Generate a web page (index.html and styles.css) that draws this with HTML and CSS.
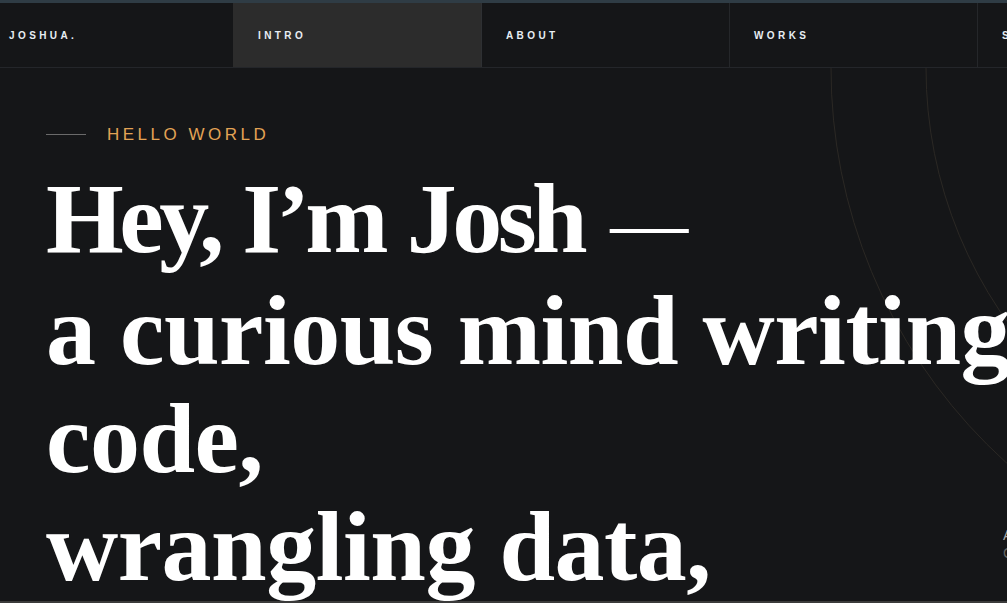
FILE: index.html
```html
<!DOCTYPE html>
<html lang="en">
<head>
<meta charset="utf-8">
<title>Joshua — Intro</title>
<link rel="stylesheet" href="styles.css">
</head>
<body>
<div class="frame">
  <div class="topbar"></div>
  <header class="header">
    <a class="brand cell" href="#">JOSHUA.</a>
    <nav class="nav">
      <a class="cell nav-item active" href="#">INTRO</a>
      <a class="cell nav-item" href="#">ABOUT</a>
      <a class="cell nav-item" href="#">WORKS</a>
      <a class="cell nav-item" href="#">SKILLS</a>
    </nav>
  </header>
  <main class="hero">
    <svg class="rings" width="1007" height="540" viewBox="0 0 1007 540" aria-hidden="true">
      <circle cx="1363" cy="0" r="532" fill="none" stroke="#2b2824" stroke-width="1"/>
      <circle cx="1363" cy="0" r="437" fill="none" stroke="#2b2824" stroke-width="1"/>
    </svg>
    <div class="content">
      <div class="eyebrow">
        <span class="rule"></span>
        <span class="eyebrow-text">HELLO WORLD</span>
      </div>
      <h1 class="title">
        <span class="line first">Hey, I’m Josh<span class="dash">—</span></span>
        <span class="line">a curious mind writing</span>
        <span class="line">code,</span>
        <span class="line">wrangling data,</span>
      </h1>
    </div>
    <div class="side-note">
      <span class="side-a">Available</span>
      <span class="side-b">Currently</span>
    </div>
  </main>
  <div class="bottombar"></div>
</div>
</body>
</html>
```

FILE: styles.css
```css
* { box-sizing: border-box; }
html, body {
  margin: 0;
  padding: 0;
  width: 1007px;
  height: 603px;
  overflow: hidden;
  background: #151618;
}
.frame {
  display: flex;
  flex-direction: column;
  width: 1007px;
  height: 603px;
  overflow: hidden;
}
.topbar {
  height: 3px;
  flex: none;
  background: #2f3c45;
}
.header {
  flex: none;
  display: flex;
  height: 65px;
  border-bottom: 1px solid #24262a;
  background: #151618;
  font-family: "Liberation Sans", Arial, sans-serif;
  font-weight: 700;
  font-size: 10px;
  letter-spacing: 3.4px;
  color: #e8eef3;
  white-space: nowrap;
}
.cell {
  display: flex;
  align-items: center;
  color: inherit;
  text-decoration: none;
}
.brand {
  width: 233px;
  flex: none;
  padding-left: 9px;
}
.nav {
  display: flex;
  flex: none;
}
.nav-item {
  width: 248px;
  flex: none;
  padding-left: 24px;
  border-left: 1px solid #25272a;
}
.nav-item:first-child { border-left: none; padding-left: 25px; }
.nav-item.active {
  background: #2c2c2c;
}
.nav-item.active + .nav-item { border-left-color: #2e3033; }
.hero {
  position: relative;
  flex: 1;
  overflow: hidden;
}
.rings {
  position: absolute;
  left: 0;
  top: 0;
}
.content {
  position: relative;
  padding: 57px 0 0 46px;
}
.eyebrow {
  display: flex;
  align-items: center;
  gap: 21px;
  height: 19px;
}
.rule {
  width: 40px;
  height: 1px;
  background: #6a6a6a;
}
.eyebrow-text {
  font-family: "Liberation Sans", Arial, sans-serif;
  font-size: 17px;
  letter-spacing: 3.5px;
  color: #e3a355;
}
.title {
  margin: 21px 0 0;
  font-family: "Liberation Serif", "Times New Roman", serif;
  font-weight: 700;
  font-size: 100px;
  line-height: 108px;
  color: #ffffff;
  white-space: nowrap;
}
.line { display: block; letter-spacing: -0.5px; }
.line.first { letter-spacing: -4.5px; word-spacing: 2px; }
.dash {
  display: inline-block;
  margin-left: 27px;
  font-weight: 400;
  font-size: 78px;
  letter-spacing: 0;
  vertical-align: 3px;
}
.side-note {
  position: absolute;
  left: 1003px;
  top: 458px;
  display: flex;
  flex-direction: column;
  font-family: "Liberation Sans", Arial, sans-serif;
  font-size: 14px;
  line-height: 18px;
  white-space: nowrap;
}
.side-a { color: #a9a9a9; }
.side-b { color: #666; }
.bottombar {
  height: 2px;
  flex: none;
  background: #3b3b3b;
}
```
